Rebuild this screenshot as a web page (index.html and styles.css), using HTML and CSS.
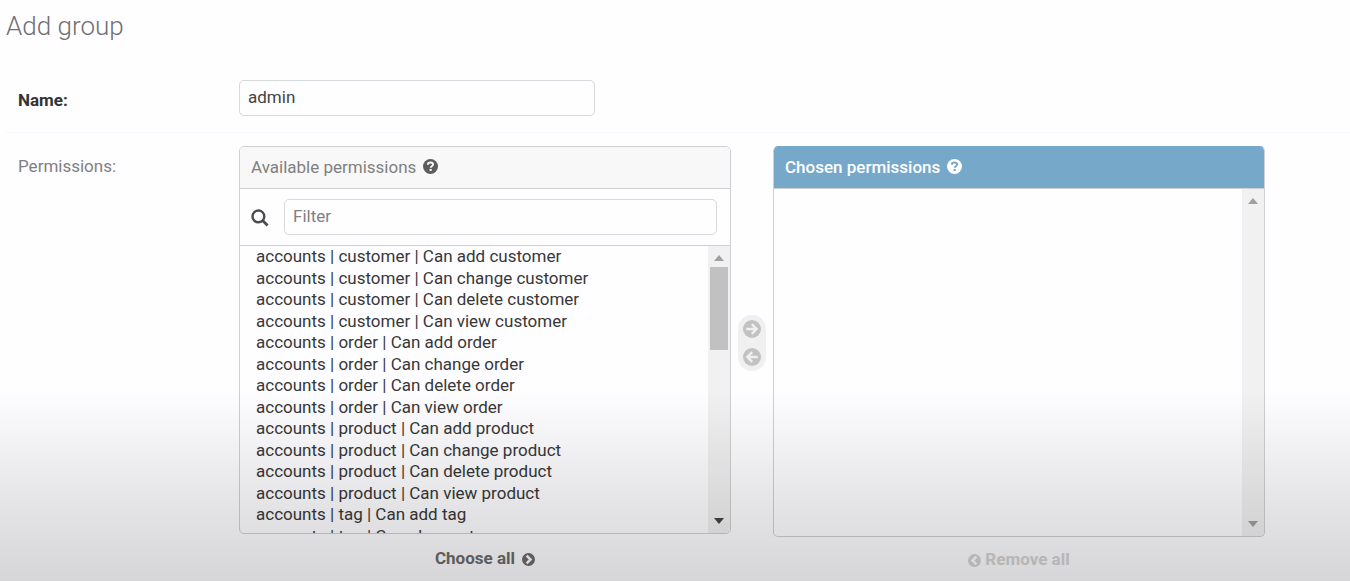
FILE: index.html
```html
<!DOCTYPE html>
<html lang="en">
<head>
<meta charset="utf-8">
<title>Add group</title>
<link rel="stylesheet" href="styles.css">
</head>
<body>
<svg class="sprite" aria-hidden="true">
  <symbol id="help" viewBox="0 0 16 16"><circle cx="8" cy="8" r="8" fill="currentColor"/><path d="M5.2 6.2C5.2 4.4 6.4 3.7 8 3.7s2.7.9 2.7 2.2c0 1.8-2.5 1.8-2.5 3.5" fill="none" stroke="var(--cut)" stroke-width="2.1"/><rect x="7" y="10.6" width="2.3" height="2.2" fill="var(--cut)"/></symbol>
  <symbol id="arrow" viewBox="0 0 18 18"><circle cx="9" cy="9" r="9" fill="currentColor"/><path d="M3.2 9h10M8.8 4.2 13.6 9l-4.8 4.8" fill="none" stroke="var(--cut)" stroke-width="2.4"/></symbol>
  <symbol id="chevron" viewBox="0 0 14 14"><circle cx="7" cy="7" r="7" fill="currentColor"/><path d="M5 2.8 9.2 7 5 11.2" fill="none" stroke="var(--cut)" stroke-width="2.7"/></symbol>
  <symbol id="up" viewBox="0 0 10 6"><path d="M0 6h10L5 0z" fill="currentColor"/></symbol>
  <symbol id="down" viewBox="0 0 10 6"><path d="M0 0h10L5 6z" fill="currentColor"/></symbol>
</svg>
<main class="page">
  <h1 class="title">Add group</h1>
  <form class="form">
    <div class="row row-name">
      <label class="label required" for="name">Name:</label>
      <input class="text name-input" id="name" type="text" value="admin">
    </div>
    <div class="row row-permissions">
      <label class="label" for="available">Permissions:</label>
      <div class="selector">
        <section class="side">
          <div class="panel">
            <h2 class="panel-title">Available permissions <svg class="help"><use href="#help"/></svg></h2>
            <div class="filter">
              <label class="search" for="filter" aria-label="Filter"><svg viewBox="0 0 18 18"><circle cx="7.4" cy="7.4" r="5.9" fill="none" stroke="currentColor" stroke-width="2.4"/><path d="m11.6 11.6 5 5" stroke="currentColor" stroke-width="2.8"/></svg></label>
              <input class="text filter-input" id="filter" type="text" placeholder="Filter">
            </div>
            <div class="scroller scroller-available">
              <select class="list" id="available" multiple>
                <option>accounts | customer | Can add customer</option>
                <option>accounts | customer | Can change customer</option>
                <option>accounts | customer | Can delete customer</option>
                <option>accounts | customer | Can view customer</option>
                <option>accounts | order | Can add order</option>
                <option>accounts | order | Can change order</option>
                <option>accounts | order | Can delete order</option>
                <option>accounts | order | Can view order</option>
                <option>accounts | product | Can add product</option>
                <option>accounts | product | Can change product</option>
                <option>accounts | product | Can delete product</option>
                <option>accounts | product | Can view product</option>
                <option>accounts | tag | Can add tag</option>
                <option>accounts | tag | Can change tag</option>
                <option>accounts | tag | Can delete tag</option>
                <option>accounts | tag | Can view tag</option>
              </select>
              <div class="scrollbar" aria-hidden="true">
                <svg><use href="#up"/></svg>
                <span class="track"><span class="thumb"></span></span>
                <svg class="active"><use href="#down"/></svg>
              </div>
            </div>
          </div>
          <a class="all" href="#">Choose all <svg><use href="#chevron"/></svg></a>
        </section>
        <div class="chooser">
          <button type="button" aria-label="Choose"><svg><use href="#arrow"/></svg></button>
          <button type="button" aria-label="Remove"><svg class="flip"><use href="#arrow"/></svg></button>
        </div>
        <section class="side">
          <div class="panel panel-chosen">
            <h2 class="panel-title chosen">Chosen permissions <svg class="help"><use href="#help"/></svg></h2>
            <div class="scroller scroller-chosen">
              <select class="list" aria-label="Chosen permissions" multiple></select>
              <div class="scrollbar" aria-hidden="true">
                <svg><use href="#up"/></svg>
                <span class="track"></span>
                <svg><use href="#down"/></svg>
              </div>
            </div>
          </div>
          <a class="all inactive" href="#"><svg class="flip"><use href="#chevron"/></svg> Remove all</a>
        </section>
      </div>
    </div>
  </form>
</main>
</body>
</html>
```
FILE: styles.css
```css
* { box-sizing: border-box; }
html { height: 100%; }
body {
  margin: 0;
  min-height: 100%;
  overflow: hidden;
  background: #fefdff;
  color: #333;
  font: 17px/20px Roboto, sans-serif;
}
body::after {
  content: "";
  position: fixed;
  inset: 0;
  pointer-events: none;
  background: linear-gradient(rgba(0,0,0,0) 67%, rgba(0,0,0,.1) 87%, rgba(0,0,0,.155));
}
.sprite { position: absolute; width: 0; height: 0; }
svg { flex: none; }
.flip { transform: scaleX(-1); }

.page { padding: 10px 0 0 6px; }
.title { margin: 0; font-size: 26px; line-height: 32px; font-weight: 300; color: #707070; }
.row { display: flex; padding-left: 12px; }
.row-name { margin-top: 26px; padding-top: 12px; padding-bottom: 16px; border-bottom: 1px solid #f8f7fa; }
.row-permissions { padding-top: 13px; padding-right: 85px; }
.label { flex: none; width: 221px; padding-top: 10px; color: #808080; }
.required { font-weight: 700; color: #333; }
.text {
  height: 36px;
  padding: 0 8px 2px;
  border: 1px solid #d6d8da;
  border-radius: 5px;
  background: #fefdff;
  color: #444;
  font: inherit;
}
.text::placeholder { color: #808080; opacity: 1; }
.name-input { width: 356px; }

.selector { display: flex; flex: 1; }
.side { flex: 1; min-width: 0; display: flex; flex-direction: column; }
.panel { border: 1px solid #d0d0d2; border-radius: 5px; overflow: hidden; }
.panel-chosen { border-top-color: #76a8c9; }
.panel-title {
  --cut: #f8f8f8;
  display: flex;
  align-items: center;
  gap: 7px;
  height: 42px;
  margin: 0;
  padding: 0 11px 2px;
  border-bottom: 1px solid #d0d0d2;
  background: #f8f8f8;
  color: #808080;
  font-size: 17px;
  font-weight: 400;
}
.help { width: 15px; height: 15px; color: #5c5c5c; }
.chosen { --cut: #76a8c9; background: #76a8c9; color: #fff; font-weight: 500; }
.chosen .help { color: #fff; }
.filter {
  display: flex;
  align-items: center;
  gap: 15px;
  height: 57px;
  padding: 0 13px 0 11px;
  border-bottom: 1px solid #d0d0d2;
}
.search { width: 18px; height: 16px; color: #4c4c4c; }
.search svg { display: block; width: 18px; height: 18px; }
.filter-input { flex: 1; min-width: 0; }

.scroller { display: flex; }
.scroller-available { height: 287px; }
.scroller-chosen { height: 347px; }
.list {
  flex: 1;
  min-width: 0;
  height: 100%;
  margin: 0;
  padding: 0 0 0 14px;
  border: 0;
  outline: 0;
  overflow-y: scroll;
  scrollbar-width: none;
  background: transparent;
  color: #383838;
  font: inherit;
}
.list option { height: 22px; padding: 0 2px; line-height: 20px; }
.list option:nth-child(even) { height: 21px; }
.scrollbar {
  display: flex;
  flex-direction: column;
  align-items: center;
  gap: 6px;
  width: 22px;
  padding: 9px 2px;
  background: #f1f1f1;
  color: #a0a0a0;
}
.scrollbar svg { width: 10px; height: 6px; }
.scrollbar .active { color: #444; }
.track { flex: 1; width: 100%; }
.thumb { display: block; height: 83px; background: #c1c1c1; }

.chooser {
  --cut: #f0f0f0;
  align-self: flex-start;
  display: flex;
  flex-direction: column;
  gap: 10px;
  margin: 169px 7px 0;
  padding: 5px;
  border-radius: 14px;
  background: #f0f0f0;
}
.chooser button { padding: 0; border: 0; background: none; color: #c2c2c2; }
.chooser svg { display: block; width: 18px; height: 18px; }
.all {
  --cut: #fefdff;
  display: flex;
  align-items: center;
  align-self: center;
  gap: 7px;
  margin-top: 14px;
  color: #6c6c6c;
  font-weight: 700;
  text-decoration: none;
}
.all svg { width: 13px; height: 13px; margin-top: 3px; }
.inactive { gap: 4px; margin-top: 12px; color: #d4d4d4; }
```
